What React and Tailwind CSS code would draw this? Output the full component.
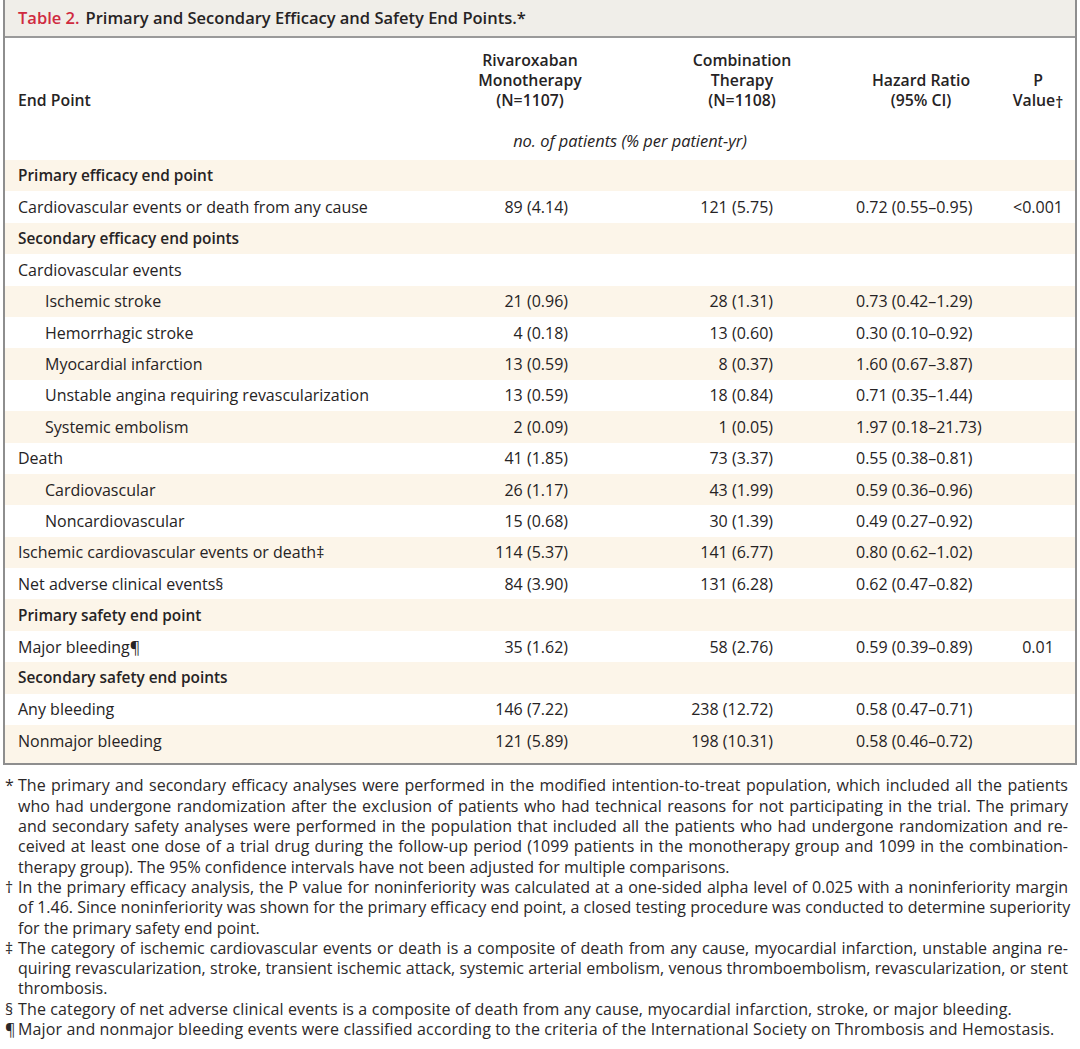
import React from 'react'

const rows = [
  { label: 'Primary efficacy end point', bold: true },
  { label: 'Cardiovascular events or death from any cause', mono: '89 (4.14)', combo: '121 (5.75)', hr: '0.72 (0.55–0.95)', p: '<0.001' },
  { label: 'Secondary efficacy end points', bold: true },
  { label: 'Cardiovascular events' },
  { label: 'Ischemic stroke', indent: true, mono: '21 (0.96)', combo: '28 (1.31)', hr: '0.73 (0.42–1.29)' },
  { label: 'Hemorrhagic stroke', indent: true, mono: '4 (0.18)', combo: '13 (0.60)', hr: '0.30 (0.10–0.92)' },
  { label: 'Myocardial infarction', indent: true, mono: '13 (0.59)', combo: '8 (0.37)', hr: '1.60 (0.67–3.87)' },
  { label: 'Unstable angina requiring revascularization', indent: true, mono: '13 (0.59)', combo: '18 (0.84)', hr: '0.71 (0.35–1.44)' },
  { label: 'Systemic embolism', indent: true, mono: '2 (0.09)', combo: '1 (0.05)', hr: '1.97 (0.18–21.73)' },
  { label: 'Death', mono: '41 (1.85)', combo: '73 (3.37)', hr: '0.55 (0.38–0.81)' },
  { label: 'Cardiovascular', indent: true, mono: '26 (1.17)', combo: '43 (1.99)', hr: '0.59 (0.36–0.96)' },
  { label: 'Noncardiovascular', indent: true, mono: '15 (0.68)', combo: '30 (1.39)', hr: '0.49 (0.27–0.92)' },
  { label: 'Ischemic cardiovascular events or death‡', mono: '114 (5.37)', combo: '141 (6.77)', hr: '0.80 (0.62–1.02)' },
  { label: 'Net adverse clinical events§', mono: '84 (3.90)', combo: '131 (6.28)', hr: '0.62 (0.47–0.82)' },
  { label: 'Primary safety end point', bold: true },
  { label: 'Major bleeding¶', mono: '35 (1.62)', combo: '58 (2.76)', hr: '0.59 (0.39–0.89)', p: '0.01' },
  { label: 'Secondary safety end points', bold: true },
  { label: 'Any bleeding', mono: '146 (7.22)', combo: '238 (12.72)', hr: '0.58 (0.47–0.71)' },
  { label: 'Nonmajor bleeding', mono: '121 (5.89)', combo: '198 (10.31)', hr: '0.58 (0.46–0.72)' },
]

const notes = [
  {
    mark: '*',
    lines: [
      'The primary and secondary efficacy analyses were performed in the modified intention-to-treat population, which included all the patients',
      'who had undergone randomization after the exclusion of patients who had technical reasons for not participating in the trial. The primary',
      'and secondary safety analyses were performed in the population that included all the patients who had undergone randomization and re-',
      'ceived at least one dose of a trial drug during the follow-up period (1099 patients in the monotherapy group and 1099 in the combination-',
      'therapy group). The 95% confidence intervals have not been adjusted for multiple comparisons.',
    ],
  },
  {
    mark: '†',
    lines: [
      'In the primary efficacy analysis, the P value for noninferiority was calculated at a one-sided alpha level of 0.025 with a noninferiority margin',
      'of 1.46. Since noninferiority was shown for the primary efficacy end point, a closed testing procedure was conducted to determine superiority',
      'for the primary safety end point.',
    ],
  },
  {
    mark: '‡',
    lines: [
      'The category of ischemic cardiovascular events or death is a composite of death from any cause, myocardial infarction, unstable angina re-',
      'quiring revascularization, stroke, transient ischemic attack, systemic arterial embolism, venous thromboembolism, revascularization, or stent',
      'thrombosis.',
    ],
  },
  {
    mark: '§',
    wide: true,
    lines: ['The category of net adverse clinical events is a composite of death from any cause, myocardial infarction, stroke, or major bleeding.'],
  },
  {
    mark: '¶',
    wide: true,
    lines: ['Major and nonmajor bleeding events were classified according to the criteria of the International Society on Thrombosis and Hemostasis.'],
  },
]

const cols = 'grid grid-cols-[465px_130px_210px_180px_85px]'

export default function App() {
  return (
    <div className="min-h-screen bg-white text-[#262324] font-['Open_Sans',sans-serif]">
      <div className="ml-[3px] w-[1074px] border-x-2 border-b-2 border-[#8e8e8e]">
        {/* title bar */}
        <div className="h-[38px] bg-[#f0eee9] border-b-2 border-[#9a9a9a] flex items-center pl-[13px] text-[16.5px] font-semibold">
          <span className="text-[#cf2a3f] mr-[6px]">Table 2.</span>
          <span>Primary and Secondary Efficacy and Safety End Points.*</span>
        </div>

        {/* column headers */}
        <div className="bg-white pt-[12px] pb-[9px] text-[15.8px] leading-[20px]">
          <div className={`${cols} items-end font-semibold`}>
            <div className="pl-[13px]">End Point</div>
            <div className="text-center pr-[10px]">
              Rivaroxaban
              <br />
              Monotherapy
              <br />
              (N=1107)
            </div>
            <div className="text-center pl-[74px]">
              Combination
              <br />
              Therapy
              <br />
              (N=1108)
            </div>
            <div className="text-center pl-[42px]">
              Hazard Ratio
              <br />
              (95% CI)
            </div>
            <div className="text-center pl-[11px]">
              P
              <br />
              Value<span className="relative top-[2px]">†</span>
            </div>
          </div>
          <div className={`${cols} mt-[21px]`}>
            <div />
            <div className="col-span-2 text-center pr-[20px] italic text-[16.4px]">no. of patients (% per patient-yr)</div>
          </div>
        </div>

        {/* body rows */}
        <div className="text-[16px]">
          {rows.map((r, i) => (
            <div
              key={r.label}
              className={`${cols} h-[31.4px] items-center ${i % 2 === 0 ? 'bg-[#fcf5e9]' : 'bg-white'}`}
            >
              <div
                className={`${r.indent ? 'pl-[40px]' : 'pl-[13px]'} ${r.bold ? 'font-semibold text-[15.4px]' : ''} whitespace-nowrap`}
              >
                {r.label}
              </div>
              <div className="text-right pr-[32px]">{r.mono}</div>
              <div className="text-right pr-[37px]">{r.combo}</div>
              <div className="pl-[46px] whitespace-nowrap">{r.hr}</div>
              <div className="text-center pl-[11px]">{r.p}</div>
            </div>
          ))}
          <div className="h-[7px] bg-[#fcf5e9]" />
        </div>
      </div>

      {/* footnotes */}
      <div className="mt-[10px] pl-[5px] text-[16px] leading-[20.3px] text-[#2b2829]">
        {notes.map((n) => (
          <div key={n.mark} className="flex">
            <div className="w-[13px] shrink-0">{n.mark}</div>
            <div className={`w-[1050px] ${n.wide ? 'tracking-[0.13px]' : ''}`}>
              {n.lines.map((line, j) => (
                <div
                  key={j}
                  className={`whitespace-nowrap ${j < n.lines.length - 1 ? 'text-justify [text-align-last:justify]' : ''}`}
                >
                  {line}
                </div>
              ))}
            </div>
          </div>
        ))}
      </div>
    </div>
  )
}
